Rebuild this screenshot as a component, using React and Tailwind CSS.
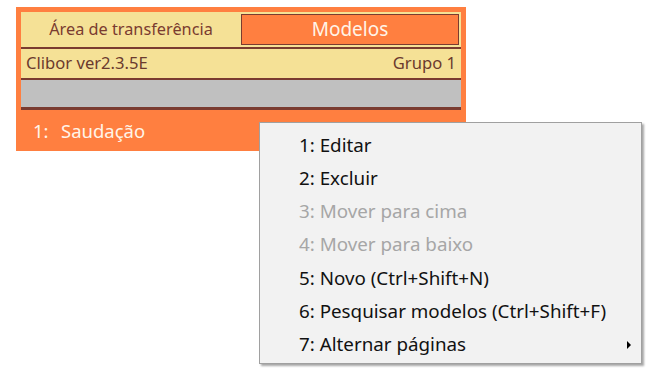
import React from 'react';

const menuItems = [
    { label: '1: Editar' },
    { label: '2: Excluir' },
    { label: '3: Mover para cima', disabled: true },
    { label: '4: Mover para baixo', disabled: true },
    { label: '5: Novo (Ctrl+Shift+N)' },
    { label: '6: Pesquisar modelos (Ctrl+Shift+F)' },
    { label: '7: Alternar páginas', submenu: true },
];

const App = () => {
    return (
        <div className="relative w-[665px] h-[385px] bg-white overflow-hidden font-['Noto_Sans','Open_Sans',sans-serif]">
            {/* Clibor window */}
            <div className="absolute left-[16px] top-[7px] w-[450px] bg-[#ff7f40] pt-[5px] px-[5px]">
                {/* Tabs */}
                <div className="flex h-[35px] bg-[#f5e196] items-center pr-[2px]">
                    <div className="w-[220px] text-center text-[16.3px] text-[#7a3b30]">Área de transferência</div>
                    <div className="flex-1 h-[31px] border border-[#7a3b30] bg-[#ff7f40] flex items-center justify-center text-[19px] text-[#fff4e8]">
                        Modelos
                    </div>
                </div>
                <div className="h-[2px] bg-[#7a3b30]" />
                <div className="flex h-[29px] items-center justify-between bg-[#f5e196] px-[5px] text-[16.6px] text-[#6b3a2e]">
                    <span>Clibor ver2.3.5E</span>
                    <span>Grupo 1</span>
                </div>
                <div className="h-[2px] bg-[#7a3b30]" />
                <div className="h-[27px] bg-[#c0c0c0]" />
                <div className="h-[3px] bg-[#7a3b30]" />
                <div className="flex h-[41px] items-center text-[18.5px] text-[#fff4e8]">
                    <span className="w-[40px] pl-[12px]">1:</span>
                    <span>Saudação</span>
                </div>
            </div>

            {/* Context menu */}
            <div className="absolute left-[259px] top-[122px] w-[383px] h-[242px] bg-[#f2f2f2] border border-[#a0a0a0] shadow-[2px_2px_2px_rgba(0,0,0,0.35)] py-[5px]">
                {menuItems.map((item, i) => (
                    <div key={i} className={`relative flex h-[33.3px] items-center pl-[39px] text-[18.8px] ${item.disabled ? 'text-[#a6a6a6]' : 'text-[#111]'}`}>
                        {item.label}
                        {item.submenu && (
                            <span className="absolute right-[10px] top-[13px] w-0 h-0 border-y-[4px] border-y-transparent border-l-[4px] border-l-black" />
                        )}
                    </div>
                ))}
            </div>
        </div>
    );
};

export default App;
